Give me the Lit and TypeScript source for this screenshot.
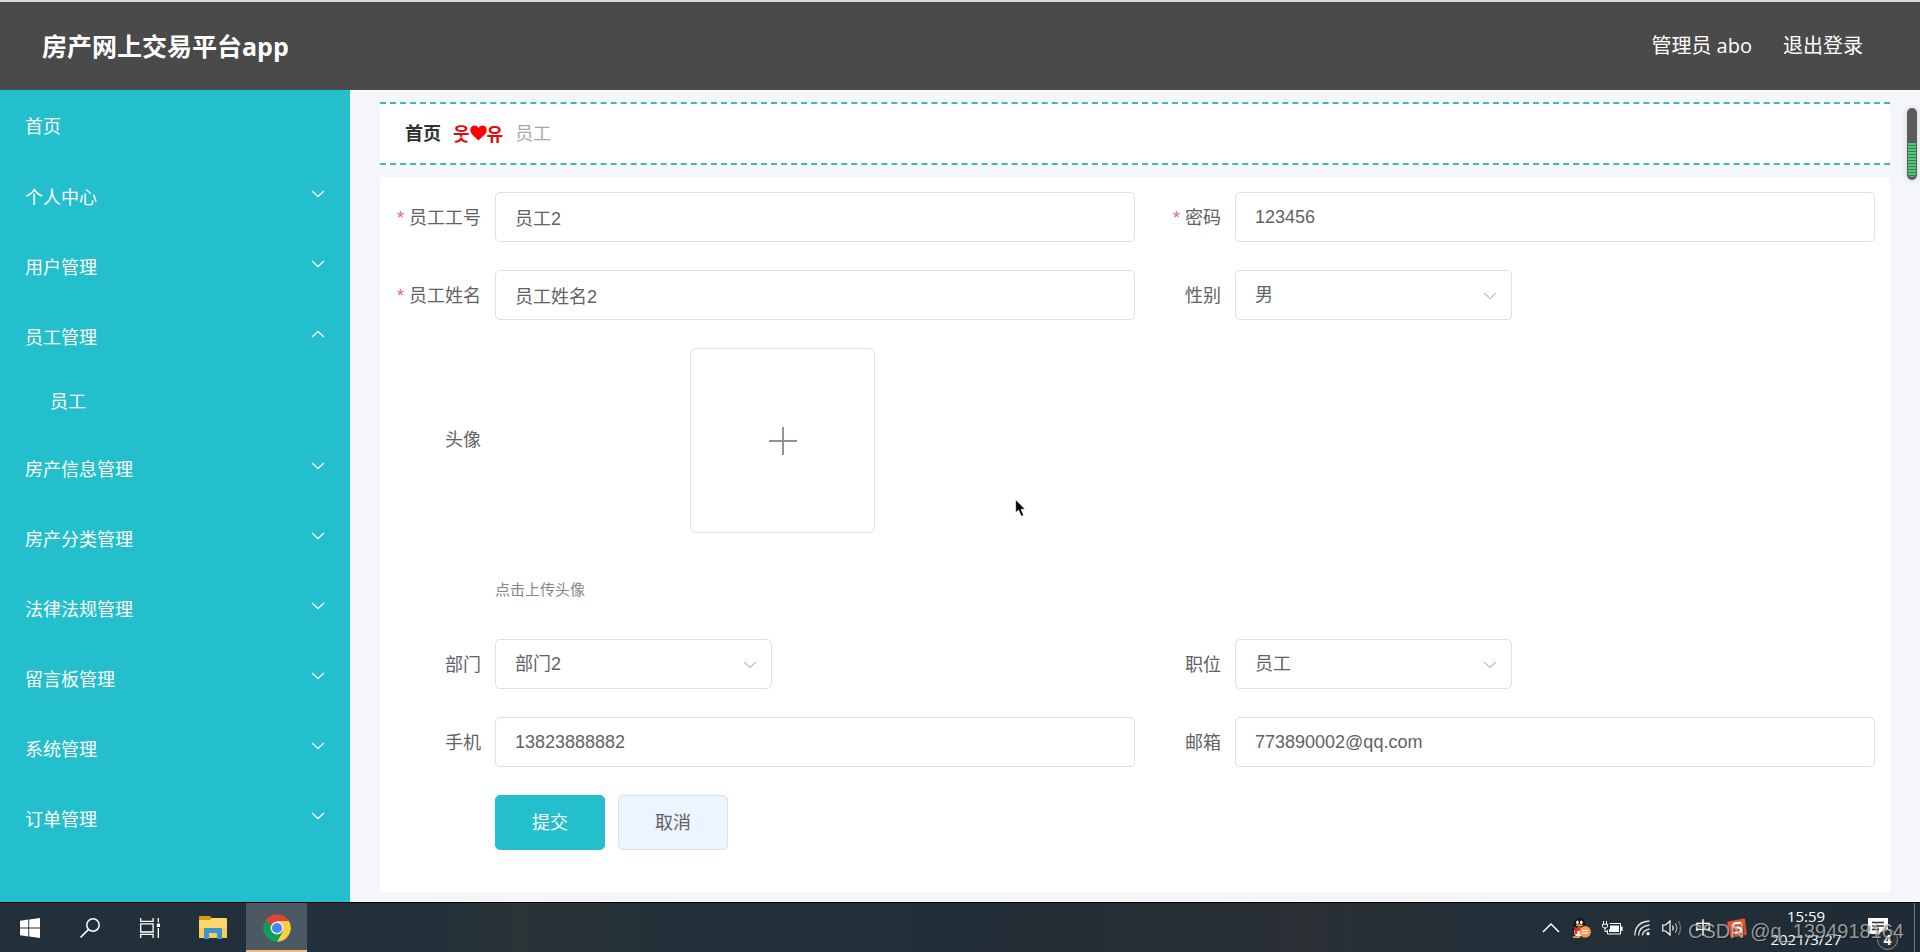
import { LitElement, html, css, svg, nothing } from "lit";
import { customElement, property, state } from "lit/decorators.js";
import { classMap } from "lit/directives/class-map.js";

const chevron = (up = false) => html`<svg class="chevron" width="14" height="8" viewBox="0 0 14 8" fill="none" stroke="currentColor" stroke-width="1.3" aria-hidden="true">
  ${up ? svg`<path d="M1 7 L7 1.5 L13 7"/>` : svg`<path d="M1 1 L7 6.5 L13 1"/>`}
</svg>`;

interface MenuEntry {
  title: string;
  children?: string[];
}

const MENU: MenuEntry[] = [
  { title: "个人中心", children: ["修改密码", "个人信息"] },
  { title: "用户管理", children: ["用户"] },
  { title: "员工管理", children: ["员工"] },
  { title: "房产信息管理", children: ["房产信息"] },
  { title: "房产分类管理", children: ["房产分类"] },
  { title: "法律法规管理", children: ["法律法规"] },
  { title: "留言板管理", children: ["留言板"] },
  { title: "系统管理", children: ["系统"] },
  { title: "订单管理", children: ["订单"] },
];

@customElement("side-menu")
class SideMenu extends LitElement {
  @state() open = "员工管理";

  static styles = css`
    :host {
      display: block;
      flex: none;
      width: 350px;
      background: #23bfcc;
      color: #fff;
      overflow: hidden;
    }
    .home, .group, .sub {
      display: flex;
      align-items: center;
      box-sizing: border-box;
      width: 100%;
      height: 70px;
      padding: 0 25px;
      border: 0;
      background: none;
      color: inherit;
      font: inherit;
      text-align: left;
      text-decoration: none;
      cursor: pointer;
    }
    .home { height: 73px; }
    .group { justify-content: space-between; }
    .sub { height: 62px; padding: 0 25px 4px 50px; }
    .chevron { margin-bottom: 8px; }
  `;

  render() {
    return html`<nav>
      <a class="home" href="#home">首页</a>
      ${MENU.map((m) => {
        const isOpen = m.title === this.open;
        return html`
          <button class="group" type="button" aria-expanded=${isOpen}
            @click=${() => (this.open = isOpen ? "" : m.title)}>
            <span>${m.title}</span>${chevron(isOpen)}
          </button>
          ${isOpen ? m.children?.map((c) => html`<a class="sub" href="#staff">${c}</a>`) : nothing}
        `;
      })}
    </nav>`;
  }
}

@customElement("form-field")
class FormField extends LitElement {
  @property() label = "";
  @property() value = "";
  @property({ type: Boolean }) required = false;
  @property({ type: Array }) options: string[] | null = null;

  static styles = css`
    :host { display: flex; min-width: 0; }
    label {
      flex: none;
      box-sizing: border-box;
      width: 100px;
      padding: 2px 14px 0 0;
      line-height: 48px;
      text-align: right;
      white-space: nowrap;
      color: #606266;
    }
    .required::before {
      content: "*";
      color: #e8686c;
      margin-right: 5px;
    }
    input, select {
      box-sizing: border-box;
      width: 100%;
      height: 50px;
      padding: 0 19px;
      border: 1px solid #dcdfe6;
      border-radius: 5px;
      background: #fff;
      color: #606266;
      font-family: inherit;
      font-size: 18px;
      outline: none;
      appearance: none;
    }
    input { flex: 1; min-width: 0; }
    .select { position: relative; width: 277px; }
    .select .chevron {
      position: absolute;
      right: 15px;
      top: 22px;
      color: #c0c4cc;
      pointer-events: none;
    }
  `;

  render() {
    return html`
      <label for="control" class=${classMap({ required: this.required })}>${this.label}</label>
      ${this.options
        ? html`<div class="select">
            <select id="control">
              ${this.options.map((o) => html`<option ?selected=${o === this.value}>${o}</option>`)}
            </select>
            ${chevron()}
          </div>`
        : html`<input id="control" type="text" .value=${this.value} />`}
    `;
  }
}

@customElement("task-bar")
class TaskBar extends LitElement {
  static styles = css`
    :host {
      position: relative;
      display: flex;
      flex: none;
      box-sizing: border-box;
      height: 50px;
      border-top: 1px solid #000;
      background: linear-gradient(90deg, #21303a 0 22%, #2a3437 27%, #22303a 36%, #222d36 55%, #2a3034 68%, #23303a 78%, #1f2c35);
      color: #fff;
      font-family: "Open Sans", "Noto Sans CJK SC", sans-serif;
    }
    button {
      display: flex;
      align-items: center;
      justify-content: center;
      box-sizing: border-box;
      padding: 0;
      border: 0;
      background: none;
      color: inherit;
      font: inherit;
    }
    .apps { display: flex; }
    .apps button { width: 60px; }
    .apps .folder { width: 66px; }
    .apps .active {
      width: 61px;
      background: #4c5962;
      border-bottom: 2px solid #f3bc7c;
      border-top: 2px solid transparent;
    }
    .tray {
      display: flex;
      align-items: center;
      margin-left: auto;
      gap: 11px;
      padding-right: 5px;
    }
    .tray .ime { font-size: 17px; width: 18px; }
    .tray .sogou { margin: 0 12px 0 4px; }
    .clock {
      display: flex;
      flex-direction: column;
      align-items: center;
      width: 72px;
      font-size: 15px;
      line-height: 23px;
      white-space: nowrap;
    }
    .notice { position: relative; width: 50px; height: 48px; }
    .badge {
      position: absolute;
      left: 24px;
      top: 25px;
      box-sizing: border-box;
      width: 21px;
      height: 21px;
      border: 1px solid #8b9398;
      border-radius: 50%;
      background: #2b3238;
      font-size: 14px;
      font-weight: 700;
      line-height: 19px;
      text-align: center;
    }
    .edge { align-self: stretch; width: 1px; background: #6d777d; }
    .mark {
      position: absolute;
      right: 16px;
      top: 16px;
      color: rgba(200, 200, 200, 0.72);
      font-family: "Liberation Sans", sans-serif;
      font-size: 20px;
      line-height: 24px;
      text-shadow: 1px 1px 1px rgba(0, 0, 0, 0.5);
      white-space: nowrap;
      pointer-events: none;
    }
  `;

  render() {
    return html`
      <div class="apps">
        <button aria-label="开始">
          <svg width="20" height="20" viewBox="0 0 20 20" fill="#fff"><path d="M0 2.8 8.3 1.6V9.6H0zM9.2 1.5 20 0V9.6H9.2zM0 10.4H8.3V18.4L0 17.2zM9.2 10.4H20V20L9.2 18.5z"/></svg>
        </button>
        <button aria-label="搜索">
          <svg width="20" height="20" viewBox="0 0 20 20" fill="none" stroke="#fff" stroke-width="1.5"><circle cx="13" cy="7" r="6.2"/><path d="M8.6 11.4 0.6 19.4"/></svg>
        </button>
        <button aria-label="任务视图">
          <svg width="20" height="20" viewBox="0 0 20 20" fill="none" stroke="#fff" stroke-width="1.3"><path d="M.7 0V3.4H13.1V0M.7 20V16.4H13.1V20M.7 5.8H13.1V14H.7zM18.3 0V4.2M18.3 10V20"/><path d="M16.8 5.5H20V9H16.8z" fill="#fff" stroke="none"/></svg>
        </button>
        <button class="folder" aria-label="文件资源管理器">
          <svg width="28" height="24" viewBox="0 0 28 24"><path d="M0 1.2Q0 0 1 0H11L13 2V5H0z" fill="#d9980f"/><path d="M0 4H11L13 2H27Q28 2 28 3V22H0z" fill="#fbd76a"/><path d="M0 12H28V22H0z" fill="#f8cd55"/><path d="M5 13Q5 12 6 12H22Q23 12 23 13V23H18V17H10V23H5z" fill="#3d92d0"/></svg>
        </button>
        <button class="active" aria-label="Chrome">
          <svg width="28" height="28" viewBox="0 0 48 48"><path d="M24 24 3.6 12.2A23.5 23.5 0 0 1 44.4 12.2z" fill="#db4437"/><path d="M24 24 3.6 12.2A23.5 23.5 0 0 0 24 47.5L34 30z" fill="#0f9d58"/><path d="M24 47.5A23.5 23.5 0 0 0 44.4 12.2H24L34.2 29.8z" fill="#ffcd40"/><path d="M24 12.2H44.4L40 7H22z" fill="#db4437"/><circle cx="24" cy="24" r="11" fill="#f1f1f1"/><circle cx="24" cy="24" r="8.6" fill="#4285f4"/></svg>
        </button>
      </div>

      <div class="tray">
        <svg width="18" height="10" viewBox="0 0 18 10" fill="none" stroke="#fff" stroke-width="1.5"><path d="M1 9 9 1 17 9"/></svg>
        <svg width="20" height="20" viewBox="0 0 20 20"><ellipse cx="8.5" cy="11" rx="7" ry="7.5" fill="#151515"/><ellipse cx="8.5" cy="6" rx="5.8" ry="6" fill="#151515"/><ellipse cx="6.5" cy="4.4" rx="1.3" ry="1.8" fill="#fff"/><ellipse cx="10.3" cy="4.4" rx="1.3" ry="1.8" fill="#fff"/><ellipse cx="8.4" cy="7.3" rx="3.6" ry="1.1" fill="#f5a623"/><ellipse cx="8" cy="14" rx="5" ry="4.5" fill="#fff"/><path d="M2.4 8.6Q8.5 12 14.6 8.6L14 11.5Q8.5 14 6.2 12.6V16H3.6V11.4z" fill="#e0242b"/><path d="M1.5 18.2H9V20H2.5z" fill="#f5a623"/><circle cx="14.2" cy="13.8" r="5.8" fill="#f79a4d"/><path d="M11.2 12.5H17.2M11.2 15H17.2" stroke="#fff" stroke-width="1.2"/></svg>
        <svg width="21" height="14" viewBox="0 0 21 14" fill="none" stroke="#fff"><path d="M1.5 0V3M4.5 0V3M.5 3.2H5.5V5.5Q5.5 7 3 7Q.5 7 .5 5.5zM3 7V10.5H5.5"/><path d="M7.5 2.5H18.5V13H5.5V9"/><path d="M8 4.5H17V11H7V8H8z" fill="#fff" stroke="none"/><path d="M19.8 5.5V10" stroke-width="1.6"/></svg>
        <svg width="17" height="16" viewBox="0 0 17 16" fill="none" stroke="#dfe3e5" stroke-width="1.3"><path d="M.8 15.5Q1.2 2 15.5 1M4.6 15.5Q5 6.2 15.5 5M8.4 15.5Q9 10.2 15.5 9"/><circle cx="14" cy="13.7" r="1.6" fill="#fff" stroke="none"/></svg>
        <svg width="21" height="16" viewBox="0 0 21 16" fill="none" stroke="#fff" stroke-width="1.2"><path d="M.8 5H3.6L8 1V15L3.6 11H.8z"/><path d="M10.6 5.6Q12 8 10.6 10.4"/><path d="M13.4 3.4Q16.2 8 13.4 12.6" stroke="#aab0b4"/><path d="M16.4 1Q20.6 8 16.4 15" stroke="#717b81"/></svg>
        <button class="ime">中</button>
        <svg class="sogou" width="20" height="20" viewBox="0 0 20 20"><path d="M1 3.6 16.6.6Q18 .6 18.2 2L19.6 15.6Q19.6 17 18.2 17.3L4.8 19.4Q3.2 19.4 3 18L.4 5.2Q.2 4 1 3.6z" fill="#e9532d"/><path d="M14.4 5Q6 4.4 6 7.4Q6 9.6 10 9.6Q14.6 9.8 14.2 12.6Q13.6 15.4 5.8 14.6" fill="none" stroke="#fff" stroke-width="2.2"/></svg>
        <div class="clock"><span>15:59</span><span>2021/3/27</span></div>
        <button class="notice" aria-label="通知">
          <svg width="20" height="20" viewBox="0 0 20 20"><path d="M0 0H20V16H13V20L9 16H0z" fill="#fff"/><path d="M4 4.5H16M4 8H16M4 11.5H11" stroke="#26323a" stroke-width="1.3"/></svg>
          <span class="badge">4</span>
        </button>
        <span class="edge"></span>
      </div>
      <span class="mark">CSDN @q_1394918164</span>
    `;
  }
}

@customElement("app-root")
class AppRoot extends LitElement {
  static styles = css`
    :host {
      position: relative;
      display: flex;
      flex-direction: column;
      box-sizing: border-box;
      height: 100vh;
      overflow: hidden;
      border-top: 2px solid #d8d8d8;
      background: #f4f6fa;
      color: #303133;
      font-family: "Liberation Sans", "Noto Sans CJK SC", sans-serif;
      font-size: 18px;
      line-height: 24px;
    }
    .top {
      display: flex;
      flex: none;
      align-items: center;
      justify-content: space-between;
      height: 88px;
      padding: 0 57px 0 42px;
      background: #4a4a4a;
      color: #fff;
      font-family: "Open Sans", "Noto Sans CJK SC", sans-serif;
      font-size: 20px;
    }
    h1 { margin: 0; font-size: 25px; font-weight: 700; }
    .account { display: flex; gap: 31px; }
    .account a { color: inherit; text-decoration: none; }
    .body { display: flex; flex: 1; min-height: 0; }
    main {
      position: relative;
      display: flex;
      flex: 1;
      flex-direction: column;
      gap: 12px;
      min-width: 0;
      padding: 12px 30px 10px;
      overflow: hidden;
    }
    .crumbs {
      display: flex;
      align-items: center;
      gap: 12px;
      flex: none;
      box-sizing: border-box;
      height: 63px;
      padding: 0 25px;
      border: dashed #3cb9bb;
      border-width: 2px 0;
      background: #fff;
    }
    .crumbs a { color: #303133; font-weight: 700; text-decoration: none; }
    .crumbs .mid {
      display: flex;
      align-items: center;
      padding-bottom: 2px;
      color: #e30b0b;
      font-family: "Noto Sans CJK KR", sans-serif;
      font-weight: 700;
    }
    .crumbs .here { color: #a3a9b5; }
    form {
      display: grid;
      grid-template-columns: 1fr 1fr;
      gap: 28px 0;
      align-content: start;
      flex: 1;
      box-sizing: border-box;
      padding: 15px;
      background: #fff;
    }
    .upload { grid-column: 1 / -1; display: flex; height: 263px; }
    .upload .name {
      box-sizing: border-box;
      width: 100px;
      padding-right: 14px;
      line-height: 185px;
      text-align: right;
      color: #606266;
    }
    .picker { display: flex; flex-direction: column; gap: 45px; }
    .picker button {
      display: flex;
      align-items: center;
      justify-content: center;
      box-sizing: border-box;
      width: 185px;
      height: 185px;
      margin-left: 195px;
      padding: 0;
      border: 1px solid #dcdfe6;
      border-radius: 6px;
      background: #fff;
    }
    .tip { color: #7f8894; font-size: 15px; }
    .actions { grid-column: 1 / -1; display: flex; gap: 13px; padding-left: 100px; }
    .actions button {
      box-sizing: border-box;
      width: 110px;
      height: 55px;
      border: 1px solid #dcdfe6;
      border-radius: 5px;
      background: #ecf4ff;
      color: #606266;
      font: inherit;
    }
    .actions .primary { border-color: #23bfcc; background: #23bfcc; color: #fff; }
    .thumb {
      position: absolute;
      right: 3px;
      top: 18px;
      box-sizing: border-box;
      width: 10px;
      height: 72px;
      padding: 35px 1px 3px;
      border-radius: 5px;
      background: #5c5c5c;
      box-shadow: 0 0 6px rgba(0, 0, 0, 0.15);
    }
    .stripes {
      height: 34px;
      border-radius: 0 0 4px 4px;
      background: repeating-linear-gradient(#4fc978 0 2px, #3c7a50 2px 3px);
    }
    .cursor { position: absolute; left: 1015px; top: 497px; pointer-events: none; }
  `;

  render() {
    return html`
      <header class="top">
        <h1>房产网上交易平台app</h1>
        <div class="account"><span>管理员 abo</span><a href="#logout">退出登录</a></div>
      </header>
      <div class="body">
        <side-menu></side-menu>
        <main>
          <nav class="crumbs">
            <a href="#home">首页</a>
            <span class="mid">웃<svg width="17" height="16" viewBox="0 0 17 16"><path d="M8.5 15.6C6.5 12.6.3 9.6.3 4.9.3 2.2 2.2.5 4.5.5 6.4.5 7.8 1.5 8.5 3.1 9.2 1.5 10.6.5 12.5.5 14.8.5 16.7 2.2 16.7 4.9 16.7 9.6 10.5 12.6 8.5 15.6z" fill="#f00"/></svg>유</span>
            <span class="here">员工</span>
          </nav>
          <form @submit=${(e: Event) => e.preventDefault()}>
            <form-field label="员工工号" value="员工2" required></form-field>
            <form-field label="密码" value="123456" required></form-field>
            <form-field label="员工姓名" value="员工姓名2" required></form-field>
            <form-field label="性别" value="男" .options=${["男", "女"]}></form-field>
            <div class="upload">
              <span class="name" id="avatar">头像</span>
              <div class="picker">
                <button type="button" aria-labelledby="avatar">
                  <svg width="30" height="30" viewBox="0 0 30 30" stroke="#8c939d" stroke-width="2"><path d="M15 1V29M1 15H29"/></svg>
                </button>
                <span class="tip">点击上传头像</span>
              </div>
            </div>
            <form-field label="部门" value="部门2" .options=${["部门1", "部门2"]}></form-field>
            <form-field label="职位" value="员工" .options=${["员工", "经理"]}></form-field>
            <form-field label="手机" value="13823888882"></form-field>
            <form-field label="邮箱" value="773890002@qq.com"></form-field>
            <div class="actions">
              <button class="primary" type="submit">提交</button>
              <button type="button">取消</button>
            </div>
          </form>
          <div class="thumb"><div class="stripes"></div></div>
        </main>
      </div>
      <task-bar></task-bar>
      <svg class="cursor" width="12" height="19" viewBox="0 0 12 19"><path d="M.7.8V13.6L3.6 11 6.2 17.2 8.6 16.2 6 10.2H10z" fill="#000" stroke="#fff" stroke-width=".6"/></svg>
    `;
  }
}
